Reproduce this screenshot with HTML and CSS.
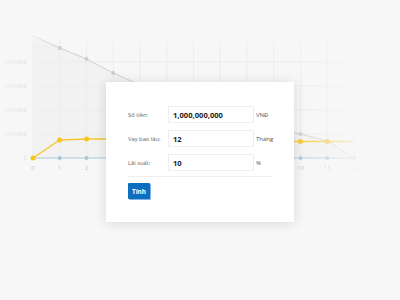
FILE: index.html
```
<!DOCTYPE html>
<html lang="vi">
<head>
<meta charset="utf-8">
<title>Tính lãi vay</title>
<link rel="stylesheet" href="styles.css">
</head>
<body>
<div class="stage">
  <svg class="chart" width="400" height="300" viewBox="0 0 400 300" xmlns="http://www.w3.org/2000/svg">
    <defs>
      <linearGradient id="fadeH" x1="0" y1="0" x2="400" y2="0" gradientUnits="userSpaceOnUse">
        <stop offset="0" stop-color="#fff" stop-opacity="0.3"/>
        <stop offset="0.075" stop-color="#fff" stop-opacity="1"/>
        <stop offset="0.72" stop-color="#fff" stop-opacity="1"/>
        <stop offset="0.92" stop-color="#fff" stop-opacity="0"/>
      </linearGradient>
      <linearGradient id="fadeV" x1="0" y1="32" x2="0" y2="46" gradientUnits="userSpaceOnUse">
        <stop offset="0" stop-color="#fff" stop-opacity="0"/>
        <stop offset="1" stop-color="#fff" stop-opacity="1"/>
      </linearGradient>
      <mask id="mh">
        <rect x="0" y="0" width="400" height="300" fill="url(#fadeH)"/>
      </mask>
      <mask id="mv">
        <rect x="0" y="0" width="400" height="300" fill="url(#fadeV)"/>
      </mask>
    </defs>
    <g mask="url(#mh)">
     <g mask="url(#mv)">
      <path d="M33,36 L59.75,48 L86.5,59 L113.25,73 L140,85 L166.75,96 L193.5,106 L220.25,115 L247,122 L273.75,128 L300.5,134 L327.25,141 L354,158 L33,158 Z" fill="#000" fill-opacity="0.018"/>
      <g stroke="#ececec" stroke-width="1">
        <line x1="33" y1="40" x2="33" y2="158"/>
        <line x1="59.75" y1="40" x2="59.75" y2="158"/>
        <line x1="86.5" y1="40" x2="86.5" y2="158"/>
        <line x1="113.25" y1="40" x2="113.25" y2="158"/>
        <line x1="140" y1="40" x2="140" y2="158"/>
        <line x1="166.75" y1="40" x2="166.75" y2="158"/>
        <line x1="193.5" y1="40" x2="193.5" y2="158"/>
        <line x1="220.25" y1="40" x2="220.25" y2="158"/>
        <line x1="247" y1="40" x2="247" y2="158"/>
        <line x1="273.75" y1="40" x2="273.75" y2="158"/>
        <line x1="300.5" y1="40" x2="300.5" y2="158"/>
        <line x1="327.25" y1="40" x2="327.25" y2="158"/>
        <line x1="354" y1="40" x2="354" y2="158"/>
        <line x1="33" y1="62" x2="380" y2="62"/>
        <line x1="33" y1="86" x2="380" y2="86"/>
        <line x1="33" y1="110" x2="380" y2="110"/>
        <line x1="33" y1="134" x2="380" y2="134"/>
      </g>
      <g class="ylabel" text-anchor="end">
        <text x="27" y="64">000,000</text>
        <text x="27" y="88">000,000</text>
        <text x="27" y="112">000,000</text>
        <text x="27" y="136">000,000</text>
        <text x="27" y="160">0</text>
      </g>
      <g class="xlabel" text-anchor="middle">
        <text x="33" y="170">0</text>
        <text x="59.75" y="170">1</text>
        <text x="86.5" y="170">2</text>
        <text x="300.5" y="170">10</text>
        <text x="327.25" y="170">11</text>
        <text x="354" y="170">12</text>
      </g>
      <polyline fill="none" stroke="#cfcfcf" stroke-width="1" points="20,30 33,36 59.75,48 86.5,59 113.25,73 140,85 166.75,96 193.5,106 220.25,115 247,122 273.75,128 300.5,134 327.25,141 354,158"/>
      <g fill="#cdcdcd">
        <circle cx="59.75" cy="48" r="2"/>
        <circle cx="86.5" cy="59" r="2"/>
        <circle cx="113.25" cy="73" r="2"/>
        <circle cx="300.5" cy="134" r="2"/>
        <circle cx="327.25" cy="141" r="2"/>
      </g>
      <polyline fill="none" stroke="#a9c9dc" stroke-width="1.2" points="33,158 354,158"/>
      <g fill="#a9c5d8">
        <circle cx="59.75" cy="158" r="2"/>
        <circle cx="86.5" cy="158" r="2"/>
        <circle cx="300.5" cy="158" r="2"/>
        <circle cx="327.25" cy="158" r="2"/>
        <circle cx="354" cy="158" r="2"/>
      </g>
      <polyline fill="none" stroke="#f8c82c" stroke-width="1.4" points="33,158 59.75,140 86.5,139 113.25,139 140,139.5 166.75,139.8 193.5,140 220.25,140.3 247,140.6 273.75,141 300.5,141.5 327.25,141.5 354,141.5"/>
      <g fill="#f8c520">
        <circle cx="33" cy="158" r="2.5"/>
        <circle cx="59.75" cy="140" r="2.5"/>
        <circle cx="86.5" cy="139" r="2.5"/>
        <circle cx="113.25" cy="139" r="2.5"/>
        <circle cx="300.5" cy="141.5" r="2.5"/>
        <circle cx="327.25" cy="141.5" r="2.5"/>
      </g>
     </g>
    </g>
  </svg>

  <form class="modal">
    <div class="row">
      <label class="label">Số tiền:</label>
      <div class="input">1,000,000,000</div>
      <span class="unit">VNĐ</span>
    </div>
    <div class="row">
      <label class="label">Vay bao lâu:</label>
      <div class="input">12</div>
      <span class="unit">Tháng</span>
    </div>
    <div class="row">
      <label class="label">Lãi suất:</label>
      <div class="input">10</div>
      <span class="unit">%</span>
    </div>
    <div class="divider"></div>
    <div class="actions">
      <button type="button" class="btn">Tính</button>
    </div>
  </form>
</div>
</body>
</html>
```
FILE: styles.css
```
html, body {
  margin: 0;
  padding: 0;
  background: #f7f7f7;
}
body {
  width: 400px;
  height: 300px;
  overflow: hidden;
  font-family: "Open Sans", "Liberation Sans", sans-serif;
}
.stage {
  position: relative;
  width: 400px;
  height: 300px;
}
.chart {
  display: block;
}
.ylabel {
  font-family: "Open Sans", sans-serif;
  font-size: 6px;
  fill: #d6d6d6;
}
.xlabel {
  font-family: "Open Sans", sans-serif;
  font-size: 6px;
  fill: #c4c4c4;
}
.modal {
  position: absolute;
  left: 106px;
  top: 82px;
  width: 188px;
  height: 140px;
  box-sizing: border-box;
  margin: 0;
  padding: 24px 21px 0 22px;
  background: #fff;
  box-shadow: 0 1px 12px rgba(0, 0, 0, 0.13);
  display: flex;
  flex-direction: column;
}
.row {
  display: flex;
  align-items: center;
  height: 17px;
  margin-bottom: 7px;
}
.label {
  width: 40px;
  flex: none;
  font-size: 5.8px;
  color: #666;
}
.input {
  width: 86px;
  height: 17px;
  box-sizing: border-box;
  flex: none;
  border: 1px solid #efefef;
  padding: 0 4px;
  display: flex;
  align-items: center;
  font-size: 7.6px;
  font-weight: 700;
  color: #222;
}
.unit {
  margin-left: 2px;
  font-size: 6px;
  color: #555;
}
.divider {
  height: 1px;
  background: #efefef;
  margin-top: -2px;
}
.actions {
  display: flex;
  padding-top: 6px;
}
.btn {
  width: 22px;
  height: 16px;
  padding: 0;
  border: none;
  border-radius: 1px;
  background: #0d6ebf;
  box-shadow: 1px 1px 0 #7fb3e3;
  color: #fff;
  font-family: "Open Sans", sans-serif;
  font-size: 6.4px;
  font-weight: 700;
}
```
